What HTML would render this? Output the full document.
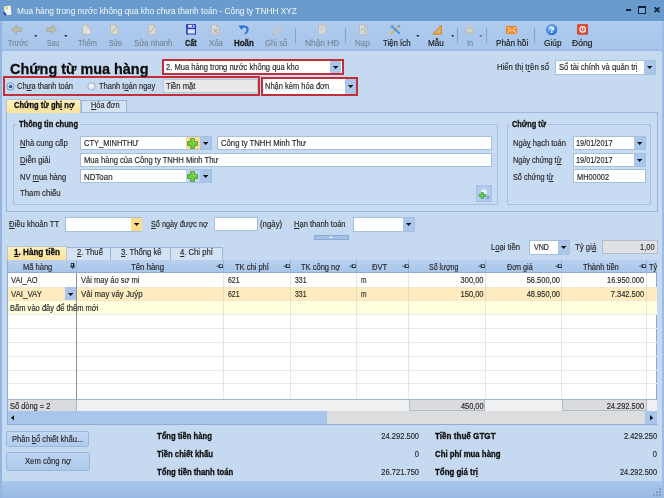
<!DOCTYPE html>
<html><head><meta charset="utf-8"><title>Chứng từ mua hàng</title>
<style>
*{box-sizing:border-box;margin:0;padding:0}
html,body{width:664px;height:498px;overflow:hidden;background:#c5daf1;font-family:"Liberation Sans",sans-serif;color:#2b2b2b}
#win{position:absolute;left:0;top:0;width:664px;height:498px;will-change:transform}
.a{position:absolute}
.t{position:absolute;white-space:nowrap;display:block;transform-origin:0 0;-webkit-text-stroke:.18px currentColor}
.t.r{transform-origin:100% 0}
.b{font-weight:bold;-webkit-text-stroke:.3px currentColor;color:#0d0d0d}
u{text-decoration:underline;text-decoration-thickness:.7px;text-underline-offset:1px}
</style></head><body><div id="win">
<div class="a" style="left:0px;top:0px;width:664px;height:21px;background:#699ccd"></div>
<div class="a" style="left:0px;top:20.5px;width:664px;height:29px;background:linear-gradient(#afcbee,#a7c5ea)"></div>
<div class="a" style="left:0px;top:49.3px;width:664px;height:1.4px;background:#9fbde4"></div>
<div class="a" style="left:0px;top:481px;width:664px;height:17px;background:linear-gradient(#a9c6ea,#98b9e3)"></div>
<div class="a" style="left:0px;top:21px;width:1.5px;height:477px;background:#93b5e0"></div>
<div class="a" style="left:661.5px;top:21px;width:2.5px;height:477px;background:#9dbce4"></div>
<svg class="a" style="left:3px;top:5px" width="9" height="11" viewBox="0 0 9 11"><path d="M1 1.500L7.500.6 8.500 9.500 1.600 10.400Z" fill="#f1f5fb"/><path d="M1 6.500L4 9.800 1.600 10.400Z" fill="#3f55b8"/><path d="M.6 7L3 10.500" stroke="#3346a8" stroke-width="1.400"/><circle cx="3.700" cy="3" r="1.500" fill="#f2c733"/></svg>
<div class="a" style="left:626.2px;top:8.7px;width:5px;height:2.2px;background:#0f2238"></div>
<div class="a" style="left:638px;top:6.3px;width:8.2px;height:7.3px;border:1px solid #0f2238;border-top-width:2.600px;background:#7aa7d6"></div>
<svg class="a" style="left:653.500px;top:7px" width="6" height="5.500" viewBox="0 0 6 5.500"><path d="M.6.400L5.400 5.100M5.400.4L.6 5.100" stroke="#0f2238" stroke-width="1.700"/></svg>
<div class="a" style="left:294.7px;top:28.3px;width:1.2px;height:14.5px;background:#7fa5d4"></div>
<div class="a" style="left:345.0px;top:28.3px;width:1.2px;height:14.5px;background:#7fa5d4"></div>
<div class="a" style="left:456.8px;top:28.3px;width:1.2px;height:14.5px;background:#7fa5d4"></div>
<div class="a" style="left:485.7px;top:28.3px;width:1.2px;height:14.5px;background:#7fa5d4"></div>
<div class="a" style="left:534.2px;top:28.3px;width:1.2px;height:14.5px;background:#7fa5d4"></div>
<svg class="a" style="left:33.8px;top:34.7px" width="3.600" height="2.300" viewBox="0 0 3.600 2.300"><path d="M0 0H3.600L1.800 2.300Z" fill="#39424f"/></svg>
<svg class="a" style="left:64.4px;top:34.7px" width="3.600" height="2.300" viewBox="0 0 3.600 2.300"><path d="M0 0H3.600L1.800 2.300Z" fill="#39424f"/></svg>
<svg class="a" style="left:416.4px;top:34.7px" width="3.600" height="2.300" viewBox="0 0 3.600 2.300"><path d="M0 0H3.600L1.800 2.300Z" fill="#39424f"/></svg>
<svg class="a" style="left:450.6px;top:34.7px" width="3.600" height="2.300" viewBox="0 0 3.600 2.300"><path d="M0 0H3.600L1.800 2.300Z" fill="#39424f"/></svg>
<svg class="a" style="left:479.2px;top:34.7px" width="3.600" height="2.300" viewBox="0 0 3.600 2.300"><path d="M0 0H3.600L1.800 2.300Z" fill="#6b7888"/></svg>
<svg class="a" style="left:11.4px;top:24px" width="11.5" height="11" viewBox="0 0 11.5 11"><path d="M.8 5.500L5.500.8V3.600H10.700V7.400H5.500V10.200Z" fill="#bcbcab" stroke="#a3a99f" stroke-width=".8" stroke-linejoin="round"/></svg>
<svg class="a" style="left:46px;top:24px" width="11.5" height="11" viewBox="0 0 11.5 11"><path d="M10.700 5.500L6 .8V3.600H.8V7.400H6V10.200Z" fill="#bcbcab" stroke="#a3a99f" stroke-width=".8" stroke-linejoin="round"/></svg>
<svg class="a" style="left:80.8px;top:24px" width="10.5" height="11" viewBox="0 0 10.5 11"><path d="M1.500.6H6.500L9 3V10.400H1.500Z" fill="#d9dbd6" stroke="#b3b8b6" stroke-width=".8"/><path d="M6.500.6V3H9" fill="#c4c8c4" stroke="#b3b8b6" stroke-width=".6"/><circle cx="7.500" cy="8" r="2" fill="#e8e6da"/></svg>
<svg class="a" style="left:109.3px;top:24px" width="10.5" height="11" viewBox="0 0 10.5 11"><path d="M1.500.6H6.500L9 3V10.400H1.500Z" fill="#d9dbd6" stroke="#b3b8b6" stroke-width=".8"/><path d="M6.500.6V3H9" fill="#c4c8c4" stroke="#b3b8b6" stroke-width=".6"/><path d="M3 8.500L7.500 3.500" stroke="#c9c4a6" stroke-width="1.600"/></svg>
<svg class="a" style="left:147.3px;top:24px" width="10.5" height="11" viewBox="0 0 10.5 11"><path d="M1.500.6H6.500L9 3V10.400H1.500Z" fill="#d9dbd6" stroke="#b3b8b6" stroke-width=".8"/><path d="M6.500.6V3H9" fill="#c4c8c4" stroke="#b3b8b6" stroke-width=".6"/><path d="M3 8.500L7.500 3.500" stroke="#c9c4a6" stroke-width="1.600"/></svg>
<svg class="a" style="left:185.6px;top:24.2px" width="10.6" height="10.6" viewBox="0 0 10.6 10.6"><path d="M.5.5H10.100V10.100H.5Z" fill="#2c47d8" stroke="#2236b0" stroke-width=".8"/><rect x="2.300" y=".9" width="6" height="2.600" fill="#e9edfb"/><rect x="5.800" y="1.100" width="1.300" height="2" fill="#2c47d8"/><rect x="1.800" y="5.300" width="7" height="4.200" fill="#f5f6fb"/><path d="M2.500 6.800H8M2.500 8.200H8" stroke="#b9c2e8" stroke-width=".6"/></svg>
<svg class="a" style="left:210px;top:24px" width="10.5" height="11" viewBox="0 0 10.5 11"><path d="M1.500.6H6.500L9 3V10.400H1.500Z" fill="#d9dbd6" stroke="#b3b8b6" stroke-width=".8"/><path d="M6.500.6V3H9" fill="#c4c8c4" stroke="#b3b8b6" stroke-width=".6"/><path d="M3.500 5L7.500 9M7.500 5L3.500 9" stroke="#b9b39c" stroke-width="1.300"/></svg>
<svg class="a" style="left:238px;top:24px" width="11.5" height="10.5" viewBox="0 0 11.5 10.5"><path d="M3.200 3.400C6.500 1.200 10.200 3 9.600 6.400 9.300 8 8.200 9 6.800 9.600" fill="none" stroke="#2a73d9" stroke-width="2"/><path d="M.6 1.800L5.800 1.200 3.600 6Z" fill="#2a73d9"/></svg>
<svg class="a" style="left:270.8px;top:24px" width="11.5" height="11" viewBox="0 0 11.5 11"><path d="M2 9.300L8.800 2.200 10 3.400 3.200 10.400Z" fill="#d8d4c8" stroke="#b8b5ac" stroke-width=".7"/><path d="M2 9.300L1.300 11 3.200 10.400Z" fill="#a9a79f"/></svg>
<svg class="a" style="left:317px;top:24px" width="10.5" height="11" viewBox="0 0 10.5 11"><path d="M1.500 1H9V8L7 10.400H1.500Z" fill="#d6d8d5" stroke="#b6bab8" stroke-width=".8"/><path d="M3 3.500H7.500M3 5.500H7.500" stroke="#c3c6c3" stroke-width=".7"/></svg>
<svg class="a" style="left:358px;top:24px" width="10.5" height="11" viewBox="0 0 10.5 11"><path d="M1.500.6H6.500L9 3V10.400H1.500Z" fill="#d9dbd6" stroke="#b3b8b6" stroke-width=".8"/><path d="M6.500.6V3H9" fill="#c4c8c4" stroke="#b3b8b6" stroke-width=".6"/><path d="M3.300 6.800A2 2 0 1 1 5.300 8.600" fill="none" stroke="#aeb3ad" stroke-width="1"/></svg>
<svg class="a" style="left:390px;top:23.8px" width="11" height="11" viewBox="0 0 11 11"><path d="M1.500 9.500L9 2" stroke="#e2b23c" stroke-width="1.700" stroke-linecap="round"/><path d="M2 2.500L9.300 9.300" stroke="#3a8fe0" stroke-width="1.700" stroke-linecap="round" stroke-dasharray="2.500 1.400"/><circle cx="2.400" cy="2.600" r="1.700" fill="none" stroke="#8fa3bd" stroke-width="1"/><circle cx="9" cy="2.200" r="1.300" fill="#5aa5ec"/></svg>
<svg class="a" style="left:431.8px;top:24px" width="10.5" height="11" viewBox="0 0 10.5 11"><path d="M9.600 1V10.200H.8Z" fill="#eaa63a" stroke="#c9822a" stroke-width=".8" stroke-linejoin="round"/><path d="M7.600 5.400V8.300H4.800Z" fill="#a9c7ec"/></svg>
<svg class="a" style="left:463.8px;top:24px" width="11.5" height="11" viewBox="0 0 11.5 11"><ellipse cx="5" cy="2.800" rx="2.800" ry="2" fill="#c9cac6"/><ellipse cx="6" cy="7" rx="5" ry="3.300" fill="#c2c3bf" stroke="#b0b2ae" stroke-width=".6"/><ellipse cx="5.500" cy="6.300" rx="3.400" ry="1.800" fill="#d3d4d0"/></svg>
<svg class="a" style="left:505.8px;top:25.6px" width="11.4" height="8.4" viewBox="0 0 11.4 8.4"><rect x=".5" y=".5" width="10.400" height="7.400" fill="#f4902d" stroke="#e0751c" stroke-width=".8"/><path d="M.8.800L5.700 4.800 10.600.8M.8 7.600L4.300 4M10.600 7.600L7.100 4" fill="none" stroke="#fde3c4" stroke-width=".9"/></svg>
<svg class="a" style="left:545.6px;top:23.8px" width="11.6" height="11.6" viewBox="0 0 11.6 11.6"><defs><radialGradient id="hg" cx=".4" cy=".3" r=".8"><stop offset="0" stop-color="#9fd0ff"/><stop offset=".6" stop-color="#3b8ae6"/><stop offset="1" stop-color="#1d62c4"/></radialGradient></defs><circle cx="5.800" cy="5.800" r="5.300" fill="url(#hg)" stroke="#2a6fcf" stroke-width=".6"/><text x="5.800" y="9" font-size="9.500" font-weight="bold" text-anchor="middle" fill="#fff" font-family="Liberation Sans,sans-serif">?</text></svg>
<svg class="a" style="left:576.8px;top:24.2px" width="11.4" height="10.6" viewBox="0 0 11.4 10.6"><rect x=".4" y=".4" width="10.600" height="9.800" rx="1" fill="#e8452c" stroke="#c9311d" stroke-width=".7"/><circle cx="5.700" cy="5.400" r="2.700" fill="none" stroke="#fff" stroke-width="1.300"/><path d="M5.700 3.800V6.600" stroke="#fff" stroke-width="1.100"/></svg>
<div class="a" style="left:162px;top:59px;width:182px;height:16px;background:#fff;border:2px solid #c32f38"></div>
<div class="a" style="left:330px;top:61px;width:11px;height:12px;background:#aac6ea"></div>
<svg class="a" style="left:332.90px;top:65.80px" width="5.200" height="3" viewBox="0 0 5.200 3"><path d="M0 0H5.200L2.600 3Z" fill="#0c0c0c"/></svg>
<div class="a" style="left:555.3px;top:60px;width:100.6px;height:14.7px;background:#fff;border:.8px solid #a5bfdf"></div>
<div class="a" style="left:644px;top:61px;width:11px;height:12.7px;background:#aac6ea"></div>
<svg class="a" style="left:646.90px;top:66.15px" width="5.200" height="3" viewBox="0 0 5.200 3"><path d="M0 0H5.200L2.600 3Z" fill="#0c0c0c"/></svg>
<div class="a" style="left:3px;top:76px;width:257px;height:20px;border:2px solid #c32f38"></div>
<svg class="a" style="left:6px;top:82px" width="9" height="9" viewBox="0 0 9 9"><defs><radialGradient id="rg1" cx=".45" cy=".4" r=".6"><stop offset="0" stop-color="#ffffff"/><stop offset="1" stop-color="#cfdcee"/></radialGradient></defs><circle cx="4.500" cy="4.400" r="3.700" fill="url(#rg1)" stroke="#6d8ab2" stroke-width=".9"/><circle cx="4.500" cy="4.400" r="1.900" fill="#1c57ad"/><circle cx="4" cy="3.900" r=".7" fill="#7fb2ee"/></svg>
<svg class="a" style="left:86.600px;top:82px" width="9" height="9" viewBox="0 0 9 9"><circle cx="4.500" cy="4.400" r="3.700" fill="url(#rg1)" stroke="#9aabc4" stroke-width=".9"/></svg>
<div class="a" style="left:163px;top:79px;width:95px;height:14px;background:#e7e9eb;border:.8px solid #bcc8d6"></div>
<div class="a" style="left:261px;top:77px;width:97px;height:19px;background:#fff;border:2px solid #c32f38"></div>
<div class="a" style="left:345px;top:79px;width:11px;height:15px;background:#aac6ea"></div>
<svg class="a" style="left:347.90px;top:85.30px" width="5.200" height="3" viewBox="0 0 5.200 3"><path d="M0 0H5.200L2.600 3Z" fill="#0c0c0c"/></svg>
<div class="a" style="left:5.5px;top:112px;width:652.3px;height:99.7px;border:.8px solid #9ab5d8;background:#c7dbf2"></div>
<div class="a" style="left:5.5px;top:99px;width:75.2px;height:13.8px;background:linear-gradient(#fff1c0,#fde296);border:.8px solid #b9c3cf;border-bottom:0"></div>
<div class="a" style="left:80.7px;top:100px;width:46.7px;height:12.2px;background:#d3e3f5;border:.8px solid #9ab5d8;border-bottom:0"></div>
<div class="a" style="left:13px;top:124.4px;width:484.8px;height:81px;border:1px solid #a6c0e1;border-radius:1px"></div>
<div class="a" style="left:17px;top:119px;width:63px;height:10px;background:#c7dbf2"></div>
<div class="a" style="left:507px;top:124.4px;width:143.6px;height:81px;border:1px solid #a6c0e1;border-radius:1px"></div>
<div class="a" style="left:510px;top:119px;width:37.5px;height:10px;background:#c7dbf2"></div>
<div class="a" style="left:80px;top:136px;width:132px;height:14px;background:#fff;border:.8px solid #a5bfdf"></div>
<div class="a" style="left:186px;top:137px;width:14px;height:12px;background:#fcdc8f"></div>
<svg class="a" style="left:187px;top:137.5px" width="11" height="11" viewBox="0 0 11 11"><path d="M3.600.6H7.400V3.600H10.400V7.400H7.400V10.400H3.600V7.400H.6V3.600H3.600Z" fill="#74cc40" stroke="#3f9c2a" stroke-width=".9" stroke-linejoin="round"/><path d="M4.400 1.600H6.600V4.400H9.400" fill="none" stroke="#a6e37a" stroke-width=".7"/></svg>
<div class="a" style="left:200px;top:137px;width:11px;height:12px;background:#aac6ea"></div>
<svg class="a" style="left:202.90px;top:141.80px" width="5.200" height="3" viewBox="0 0 5.200 3"><path d="M0 0H5.200L2.600 3Z" fill="#0c0c0c"/></svg>
<div class="a" style="left:217px;top:136px;width:275px;height:14px;background:#fff;border:.8px solid #a5bfdf"></div>
<div class="a" style="left:80px;top:153px;width:412px;height:14px;background:#fff;border:.8px solid #a5bfdf"></div>
<div class="a" style="left:80px;top:169px;width:132px;height:14px;background:#fff;border:.8px solid #a5bfdf"></div>
<div class="a" style="left:186px;top:170px;width:14px;height:12px;background:#bfd6f2"></div>
<svg class="a" style="left:187px;top:170.5px" width="11" height="11" viewBox="0 0 11 11"><path d="M3.600.6H7.400V3.600H10.400V7.400H7.400V10.400H3.600V7.400H.6V3.600H3.600Z" fill="#74cc40" stroke="#3f9c2a" stroke-width=".9" stroke-linejoin="round"/><path d="M4.400 1.600H6.600V4.400H9.400" fill="none" stroke="#a6e37a" stroke-width=".7"/></svg>
<div class="a" style="left:200px;top:170px;width:11px;height:12px;background:#aac6ea"></div>
<svg class="a" style="left:202.90px;top:174.80px" width="5.200" height="3" viewBox="0 0 5.200 3"><path d="M0 0H5.200L2.600 3Z" fill="#0c0c0c"/></svg>
<div class="a" style="left:476px;top:185px;width:16px;height:17px;background:#b3cced;border:1px solid #a6c1e5"></div>
<svg class="a" style="left:477.5px;top:187.5px" width="12.5" height="12" viewBox="0 0 12.5 12"><circle cx="5.800" cy="4.200" r="3.600" fill="#e8f1fb" stroke="#a9c0de" stroke-width=".8"/><path d="M.8 7.500H7.800M4.300 4.100V10.900" stroke="#43b03c" stroke-width="2.800"/><path d="M1.500 7.500H7.100M4.300 4.800V10.200" stroke="#6fcf5a" stroke-width="1.200"/><circle cx="10" cy="9.400" r="1.400" fill="#9db7ea" stroke="#6f8fd0" stroke-width=".7"/></svg>
<div class="a" style="left:573px;top:136px;width:73px;height:14px;background:#fff;border:.8px solid #a5bfdf"></div>
<div class="a" style="left:634px;top:137px;width:11px;height:12px;background:#aac6ea"></div>
<svg class="a" style="left:636.90px;top:141.80px" width="5.200" height="3" viewBox="0 0 5.200 3"><path d="M0 0H5.200L2.600 3Z" fill="#0c0c0c"/></svg>
<div class="a" style="left:573px;top:153px;width:73px;height:14px;background:#fff;border:.8px solid #a5bfdf"></div>
<div class="a" style="left:634px;top:154px;width:11px;height:12px;background:#aac6ea"></div>
<svg class="a" style="left:636.90px;top:158.80px" width="5.200" height="3" viewBox="0 0 5.200 3"><path d="M0 0H5.200L2.600 3Z" fill="#0c0c0c"/></svg>
<div class="a" style="left:573px;top:169px;width:73px;height:14px;background:#fff;border:.8px solid #a5bfdf"></div>
<div class="a" style="left:64.8px;top:217.3px;width:77.7px;height:14.3px;background:#fff;border:.8px solid #a5bfdf"></div>
<div class="a" style="left:130.6px;top:218px;width:11.2px;height:12.9px;background:#fcdc8c"></div>
<svg class="a" style="left:133.60px;top:223.25px" width="5.200" height="3" viewBox="0 0 5.200 3"><path d="M0 0H5.200L2.600 3Z" fill="#0c0c0c"/></svg>
<div class="a" style="left:213.6px;top:217.3px;width:44.4px;height:14px;background:#fff;border:.8px solid #a5bfdf"></div>
<div class="a" style="left:353.3px;top:217.3px;width:61.5px;height:14.3px;background:#fff;border:.8px solid #a5bfdf"></div>
<div class="a" style="left:402.5px;top:218px;width:11.6px;height:12.9px;background:#aac6ea"></div>
<svg class="a" style="left:405.70px;top:223.25px" width="5.200" height="3" viewBox="0 0 5.200 3"><path d="M0 0H5.200L2.600 3Z" fill="#0c0c0c"/></svg>
<div class="a" style="left:314.3px;top:234.6px;width:34.7px;height:5.4px;background:#a3c1e8;border:.7px solid #8cacd6"></div>
<svg class="a" style="left:329.400px;top:236.200px" width="4" height="2.200" viewBox="0 0 4 2.200"><path d="M0 2.200H4L2 0Z" fill="#fff"/></svg>
<div class="a" style="left:529px;top:240.4px;width:40.8px;height:14.3px;background:#fff;border:.8px solid #a5bfdf"></div>
<div class="a" style="left:558px;top:241.1px;width:11.1px;height:12.9px;background:#aac6ea"></div>
<svg class="a" style="left:560.95px;top:246.35px" width="5.200" height="3" viewBox="0 0 5.200 3"><path d="M0 0H5.200L2.600 3Z" fill="#0c0c0c"/></svg>
<div class="a" style="left:601.6px;top:240.2px;width:56px;height:14px;background:#dfe1e4;border:.8px solid #b3bdc9"></div>
<div class="a" style="left:6.8px;top:246.2px;width:60.5px;height:13.6px;background:linear-gradient(#fff1c0,#fde296);border:.8px solid #b9c3cf;border-bottom:0"></div>
<div class="a" style="left:67.3px;top:247px;width:43.7px;height:12.6px;background:#d3e3f5;border:.8px solid #9ab5d8;border-bottom:0;border-left:0"></div>
<div class="a" style="left:111px;top:247px;width:60.400000000000006px;height:12.6px;background:#d3e3f5;border:.8px solid #9ab5d8;border-bottom:0;border-left:0"></div>
<div class="a" style="left:171.4px;top:247px;width:51.5px;height:12.6px;background:#d3e3f5;border:.8px solid #9ab5d8;border-bottom:0;border-left:0"></div>
<div class="a" style="left:6.8px;top:259.5px;width:650.7px;height:165.5px;background:#fff;border:.8px solid #8fabd0"></div>
<div class="a" style="left:7.6px;top:260.2px;width:649.1px;height:13px;background:linear-gradient(#b9d1f0,#a8c5e9);border-bottom:.8px solid #8fabd0"></div>
<div class="a" style="left:76.19999999999999px;top:260.2px;width:0.9px;height:13px;background:#97b4dc"></div>
<div class="a" style="left:223.2px;top:260.2px;width:0.9px;height:13px;background:#97b4dc"></div>
<div class="a" style="left:289.8px;top:260.2px;width:0.9px;height:13px;background:#97b4dc"></div>
<div class="a" style="left:356.1px;top:260.2px;width:0.9px;height:13px;background:#97b4dc"></div>
<div class="a" style="left:408.40000000000003px;top:260.2px;width:0.9px;height:13px;background:#97b4dc"></div>
<div class="a" style="left:485.1px;top:260.2px;width:0.9px;height:13px;background:#97b4dc"></div>
<div class="a" style="left:561.4px;top:260.2px;width:0.9px;height:13px;background:#97b4dc"></div>
<div class="a" style="left:646.2px;top:260.2px;width:0.9px;height:13px;background:#97b4dc"></div>
<svg class="a" style="left:69.8px;top:262.600px" width="5.400" height="6.800" viewBox="0 0 5.400 6.800"><rect x="1.300" y=".4" width="2.600" height="3.200" fill="none" stroke="#16202e" stroke-width=".8"/><path d="M3.500.4V3.600" stroke="#16202e" stroke-width="1.300"/><path d="M.2 3.900H5.200" stroke="#16202e" stroke-width=".9"/><path d="M2.700 4.200V6.800" stroke="#16202e" stroke-width=".8"/></svg>
<svg class="a" style="left:216.3px;top:263.900px" width="7" height="4.400" viewBox="0 0 7 4.400"><path d="M.3 2.200H3" stroke="#1b2738" stroke-width=".7"/><path d="M3.100 .3V4.100" stroke="#1b2738" stroke-width=".8"/><rect x="3.500" y=".8" width="2.800" height="2.800" fill="#d5e2f3" stroke="#1b2738" stroke-width=".8"/><path d="M3.300 3.500H6.700" stroke="#1b2738" stroke-width=".9"/></svg>
<svg class="a" style="left:282.5px;top:263.900px" width="7" height="4.400" viewBox="0 0 7 4.400"><path d="M.3 2.200H3" stroke="#1b2738" stroke-width=".7"/><path d="M3.100 .3V4.100" stroke="#1b2738" stroke-width=".8"/><rect x="3.500" y=".8" width="2.800" height="2.800" fill="#d5e2f3" stroke="#1b2738" stroke-width=".8"/><path d="M3.300 3.500H6.700" stroke="#1b2738" stroke-width=".9"/></svg>
<svg class="a" style="left:349.3px;top:263.900px" width="7" height="4.400" viewBox="0 0 7 4.400"><path d="M.3 2.200H3" stroke="#1b2738" stroke-width=".7"/><path d="M3.100 .3V4.100" stroke="#1b2738" stroke-width=".8"/><rect x="3.500" y=".8" width="2.800" height="2.800" fill="#d5e2f3" stroke="#1b2738" stroke-width=".8"/><path d="M3.300 3.500H6.700" stroke="#1b2738" stroke-width=".9"/></svg>
<svg class="a" style="left:401.6px;top:263.900px" width="7" height="4.400" viewBox="0 0 7 4.400"><path d="M.3 2.200H3" stroke="#1b2738" stroke-width=".7"/><path d="M3.100 .3V4.100" stroke="#1b2738" stroke-width=".8"/><rect x="3.500" y=".8" width="2.800" height="2.800" fill="#d5e2f3" stroke="#1b2738" stroke-width=".8"/><path d="M3.300 3.500H6.700" stroke="#1b2738" stroke-width=".9"/></svg>
<svg class="a" style="left:478.3px;top:263.900px" width="7" height="4.400" viewBox="0 0 7 4.400"><path d="M.3 2.200H3" stroke="#1b2738" stroke-width=".7"/><path d="M3.100 .3V4.100" stroke="#1b2738" stroke-width=".8"/><rect x="3.500" y=".8" width="2.800" height="2.800" fill="#d5e2f3" stroke="#1b2738" stroke-width=".8"/><path d="M3.300 3.500H6.700" stroke="#1b2738" stroke-width=".9"/></svg>
<svg class="a" style="left:554.6px;top:263.900px" width="7" height="4.400" viewBox="0 0 7 4.400"><path d="M.3 2.200H3" stroke="#1b2738" stroke-width=".7"/><path d="M3.100 .3V4.100" stroke="#1b2738" stroke-width=".8"/><rect x="3.500" y=".8" width="2.800" height="2.800" fill="#d5e2f3" stroke="#1b2738" stroke-width=".8"/><path d="M3.300 3.500H6.700" stroke="#1b2738" stroke-width=".9"/></svg>
<svg class="a" style="left:639.4px;top:263.900px" width="7" height="4.400" viewBox="0 0 7 4.400"><path d="M.3 2.200H3" stroke="#1b2738" stroke-width=".7"/><path d="M3.100 .3V4.100" stroke="#1b2738" stroke-width=".8"/><rect x="3.500" y=".8" width="2.800" height="2.800" fill="#d5e2f3" stroke="#1b2738" stroke-width=".8"/><path d="M3.300 3.500H6.700" stroke="#1b2738" stroke-width=".9"/></svg>
<div class="a" style="left:7.6px;top:286.6px;width:649.1px;height:14.6px;background:#ffedc1"></div>
<div class="a" style="left:7.6px;top:301.2px;width:649.1px;height:13.3px;background:#ffffdd"></div>
<div class="a" style="left:7.6px;top:286.5px;width:649.1px;height:0.8px;background:#ebe3d0;opacity:.5"></div>
<div class="a" style="left:7.6px;top:300.20000000000005px;width:649.1px;height:0.8px;background:#ebe3d0;opacity:.5"></div>
<div class="a" style="left:7.6px;top:314.1px;width:649.1px;height:0.8px;background:#e9ecef"></div>
<div class="a" style="left:7.6px;top:327.90000000000003px;width:649.1px;height:0.8px;background:#e9ecef"></div>
<div class="a" style="left:7.6px;top:341.8px;width:649.1px;height:0.8px;background:#e9ecef"></div>
<div class="a" style="left:7.6px;top:355.70000000000005px;width:649.1px;height:0.8px;background:#e9ecef"></div>
<div class="a" style="left:7.6px;top:369.5px;width:649.1px;height:0.8px;background:#e9ecef"></div>
<div class="a" style="left:7.6px;top:383.40000000000003px;width:649.1px;height:0.8px;background:#e9ecef"></div>
<div class="a" style="left:223.2px;top:273.2px;width:0.8px;height:125.8px;background:rgba(110,120,135,.17)"></div>
<div class="a" style="left:289.8px;top:273.2px;width:0.8px;height:125.8px;background:rgba(110,120,135,.17)"></div>
<div class="a" style="left:356.1px;top:273.2px;width:0.8px;height:125.8px;background:rgba(110,120,135,.17)"></div>
<div class="a" style="left:408.40000000000003px;top:273.2px;width:0.8px;height:125.8px;background:rgba(110,120,135,.17)"></div>
<div class="a" style="left:485.1px;top:273.2px;width:0.8px;height:125.8px;background:rgba(110,120,135,.17)"></div>
<div class="a" style="left:561.4px;top:273.2px;width:0.8px;height:125.8px;background:rgba(110,120,135,.17)"></div>
<div class="a" style="left:646.2px;top:273.2px;width:0.8px;height:125.8px;background:rgba(110,120,135,.17)"></div>
<div class="a" style="left:76.2px;top:273.2px;width:1px;height:125.8px;background:#8e8f91"></div>
<div class="a" style="left:76.2px;top:300.6px;width:1px;height:14px;background:#8e8f91"></div>
<div class="a" style="left:64.8px;top:287.3px;width:11.4px;height:13px;background:#aac6ea"></div>
<svg class="a" style="left:67.90px;top:292.60px" width="5.200" height="3" viewBox="0 0 5.200 3"><path d="M0 0H5.200L2.600 3Z" fill="#0c0c0c"/></svg>
<div class="a" style="left:7.6px;top:399px;width:649.1px;height:12.3px;background:#eff0f1;border-top:.8px solid #9fb5d1"></div>
<div class="a" style="left:7.6px;top:399.6px;width:69px;height:11.7px;background:#d9dbde;border-right:.8px solid #aeb4bc"></div>
<div class="a" style="left:408.8px;top:399.6px;width:76.7px;height:11.7px;background:#d9dbde;border:.8px solid #b7bcc4;border-top:0"></div>
<div class="a" style="left:562px;top:399.6px;width:84.6px;height:11.7px;background:#d9dbde;border:.8px solid #b7bcc4;border-top:0"></div>
<div class="a" style="left:7.6px;top:411.3px;width:649.1px;height:13px;background:#dcdddf"></div>
<div class="a" style="left:7.6px;top:411.3px;width:319.2px;height:13px;background:#a9c6ea"></div>
<div class="a" style="left:645px;top:411.3px;width:11.7px;height:13px;background:#a9c6ea"></div>
<svg class="a" style="left:11.300px;top:415.400px" width="3.200" height="5.600" viewBox="0 0 3.200 5.600"><path d="M3.200 0V5.600L0 2.800Z" fill="#0c0c0c"/></svg>
<svg class="a" style="left:650px;top:415.400px" width="3.200" height="5.600" viewBox="0 0 3.200 5.600"><path d="M0 0V5.600L3.200 2.800Z" fill="#0c0c0c"/></svg>
<div class="a" style="left:6.3px;top:431.3px;width:83px;height:15.4px;background:linear-gradient(#c2d8f3,#afcbee);border:.8px solid #9ab6da;border-radius:1.500px"></div>
<div class="a" style="left:6.3px;top:452.4px;width:83.7px;height:18.6px;background:linear-gradient(#bdd5f2,#abc8ec);border:.8px solid #9ab6da;border-radius:1.500px"></div>
<div class="a" style="left:659px;top:494px;width:1.5px;height:1.5px;background:#7f9fc9"></div>
<div class="a" style="left:656px;top:494px;width:1.5px;height:1.5px;background:#7f9fc9"></div>
<div class="a" style="left:659px;top:491px;width:1.5px;height:1.5px;background:#7f9fc9"></div>
<div class="a" style="left:653px;top:494px;width:1.5px;height:1.5px;background:#7f9fc9"></div>
<div class="a" style="left:656px;top:491px;width:1.5px;height:1.5px;background:#7f9fc9"></div>
<div class="a" style="left:659px;top:488px;width:1.5px;height:1.5px;background:#7f9fc9"></div>
<div class="t" style="top:5.58px;font-size:9px;line-height:11px;left:16.60px;color:#f3f7fc;transform:scaleX(0.924);-webkit-text-stroke:0;">Mua hàng trong nước không qua kho chưa thanh toán - Công ty TNHH XYZ</div>
<div class="t" style="top:37.31px;font-size:9.2px;line-height:12px;left:7.50px;color:#7b899e;transform:scaleX(0.789);">Trước</div>
<div class="t" style="top:37.31px;font-size:9.2px;line-height:12px;left:46.70px;color:#7b899e;transform:scaleX(0.740);">Sau</div>
<div class="t" style="top:37.31px;font-size:9.2px;line-height:12px;left:77.80px;color:#7b899e;transform:scaleX(0.813);">Thêm</div>
<div class="t" style="top:37.31px;font-size:9.2px;line-height:12px;left:108.60px;color:#7b899e;transform:scaleX(0.742);">Sửa</div>
<div class="t" style="top:37.31px;font-size:9.2px;line-height:12px;left:134.40px;color:#7b899e;transform:scaleX(0.844);">Sửa nhanh</div>
<div class="t b" style="top:37.31px;font-size:9.2px;line-height:12px;left:184.80px;color:#1c1c1c;transform:scaleX(0.783);">Cất</div>
<div class="t" style="top:37.31px;font-size:9.2px;line-height:12px;left:208.60px;color:#7b899e;transform:scaleX(0.844);">Xóa</div>
<div class="t b" style="top:37.31px;font-size:9.2px;line-height:12px;left:234.00px;color:#1c1c1c;transform:scaleX(0.862);">Hoãn</div>
<div class="t" style="top:37.31px;font-size:9.2px;line-height:12px;left:265.40px;color:#7b899e;transform:scaleX(0.840);">Ghi sổ</div>
<div class="t" style="top:37.31px;font-size:9.2px;line-height:12px;left:304.60px;color:#7b899e;transform:scaleX(0.907);">Nhận HĐ</div>
<div class="t" style="top:37.31px;font-size:9.2px;line-height:12px;left:355.00px;color:#7b899e;transform:scaleX(0.878);">Nạp</div>
<div class="t" style="top:37.31px;font-size:9.2px;line-height:12px;left:382.50px;color:#1c1c1c;transform:scaleX(0.850);">Tiện ích</div>
<div class="t" style="top:37.31px;font-size:9.2px;line-height:12px;left:428.30px;color:#1c1c1c;transform:scaleX(0.890);">Mẫu</div>
<div class="t" style="top:37.31px;font-size:9.2px;line-height:12px;left:466.90px;color:#7b899e;transform:scaleX(0.795);">In</div>
<div class="t" style="top:37.31px;font-size:9.2px;line-height:12px;left:496.00px;color:#1c1c1c;transform:scaleX(0.888);">Phản hồi</div>
<div class="t" style="top:37.31px;font-size:9.2px;line-height:12px;left:543.50px;color:#1c1c1c;transform:scaleX(0.901);">Giúp</div>
<div class="t" style="top:37.31px;font-size:9.2px;line-height:12px;left:572.00px;color:#1c1c1c;transform:scaleX(0.933);">Đóng</div>
<div class="t b" style="top:59.33px;font-size:15.5px;line-height:19px;left:9.50px;color:#0b0b0b;transform:scaleX(0.929);">Chứng từ mua hàng</div>
<div class="t" style="top:62.38px;font-size:9px;line-height:11px;left:165.60px;transform:scaleX(0.839);">2. Mua hàng trong nước không qua kho</div>
<div class="t" style="top:61.78px;font-size:9px;line-height:11px;left:497.40px;transform:scaleX(0.859);">Hiển thị t<u>r</u>ên sổ</div>
<div class="t" style="top:61.78px;font-size:9px;line-height:11px;left:559.00px;transform:scaleX(0.853);">Sổ tài chính và quản trị</div>
<div class="t" style="top:80.78px;font-size:9px;line-height:11px;left:17.00px;transform:scaleX(0.828);">Ch<u>ư</u>a thanh toán</div>
<div class="t" style="top:80.78px;font-size:9px;line-height:11px;left:98.70px;transform:scaleX(0.833);">Thanh t<u>o</u>án ngay</div>
<div class="t" style="top:80.78px;font-size:9px;line-height:11px;left:165.60px;transform:scaleX(0.848);">Tiền mặt</div>
<div class="t" style="top:80.78px;font-size:9px;line-height:11px;left:264.80px;transform:scaleX(0.834);">Nhận kèm hóa đơn</div>
<div class="t b" style="top:99.78px;font-size:9px;line-height:11px;left:14.30px;transform:scaleX(0.838);">Chứng từ gh<u>i</u> nợ</div>
<div class="t" style="top:99.78px;font-size:9px;line-height:11px;left:90.50px;transform:scaleX(0.816);"><u>H</u>óa đơn</div>
<div class="t b" style="top:118.58px;font-size:9px;line-height:11px;left:19.00px;transform:scaleX(0.837);">Thông tin chung</div>
<div class="t b" style="top:118.58px;font-size:9px;line-height:11px;left:511.80px;transform:scaleX(0.819);">Chứng từ</div>
<div class="t" style="top:138.08px;font-size:9px;line-height:11px;left:19.60px;transform:scaleX(0.859);"><u>N</u>hà cung cấp</div>
<div class="t" style="top:138.08px;font-size:9px;line-height:11px;left:84.00px;transform:scaleX(0.833);">CTY_MINHTHƯ</div>
<div class="t" style="top:138.08px;font-size:9px;line-height:11px;left:221.00px;transform:scaleX(0.857);">Công ty TNHH Minh Thư</div>
<div class="t" style="top:154.58px;font-size:9px;line-height:11px;left:19.60px;transform:scaleX(0.868);"><u>D</u>iễn giải</div>
<div class="t" style="top:154.58px;font-size:9px;line-height:11px;left:84.00px;transform:scaleX(0.847);">Mua hàng của Công ty TNHH Minh Thư</div>
<div class="t" style="top:172.38px;font-size:9px;line-height:11px;left:19.60px;transform:scaleX(0.839);">NV <u>m</u>ua hàng</div>
<div class="t" style="top:172.38px;font-size:9px;line-height:11px;left:84.00px;transform:scaleX(0.877);">NDToan</div>
<div class="t" style="top:187.78px;font-size:9px;line-height:11px;left:19.60px;transform:scaleX(0.865);">Tham chiếu</div>
<div class="t" style="top:138.08px;font-size:9px;line-height:11px;left:513.30px;transform:scaleX(0.840);">Ngà<u>y</u> hạch toán</div>
<div class="t" style="top:138.08px;font-size:9px;line-height:11px;left:576.40px;transform:scaleX(0.812);">19/01/2017</div>
<div class="t" style="top:154.58px;font-size:9px;line-height:11px;left:513.30px;transform:scaleX(0.807);">Ngày chứng t<u>ừ</u></div>
<div class="t" style="top:154.58px;font-size:9px;line-height:11px;left:576.40px;transform:scaleX(0.812);">19/01/2017</div>
<div class="t" style="top:172.18px;font-size:9px;line-height:11px;left:513.30px;transform:scaleX(0.808);">Số chứng t<u>ừ</u></div>
<div class="t" style="top:172.18px;font-size:9px;line-height:11px;left:577.00px;transform:scaleX(0.820);">MH00002</div>
<div class="t" style="top:218.68px;font-size:9px;line-height:11px;left:8.80px;transform:scaleX(0.853);"><u>Đ</u>iều khoản TT</div>
<div class="t" style="top:218.68px;font-size:9px;line-height:11px;left:151.00px;transform:scaleX(0.807);"><u>S</u>ố ngày được nợ</div>
<div class="t" style="top:218.68px;font-size:9px;line-height:11px;left:259.80px;transform:scaleX(0.870);">(ngày)</div>
<div class="t" style="top:218.68px;font-size:9px;line-height:11px;left:293.70px;transform:scaleX(0.837);"><u>H</u>ạn thanh toán</div>
<div class="t" style="top:241.88px;font-size:9px;line-height:11px;left:490.70px;transform:scaleX(0.851);">L<u>o</u>ại tiền</div>
<div class="t" style="top:241.88px;font-size:9px;line-height:11px;left:533.70px;transform:scaleX(0.789);">VND</div>
<div class="t" style="top:241.88px;font-size:9px;line-height:11px;left:574.90px;transform:scaleX(0.868);">Tỷ gi<u>á</u></div>
<div class="t r" style="top:241.88px;font-size:9px;line-height:11px;right:9.00px;transform:scaleX(0.827);">1,00</div>
<div class="t b" style="top:246.98px;font-size:9px;line-height:11px;left:14.30px;transform:scaleX(0.901);"><u>1</u>. Hàng tiền</div>
<div class="t" style="top:246.98px;font-size:9px;line-height:11px;left:76.60px;transform:scaleX(0.853);"><u>2</u>. Thuế</div>
<div class="t" style="top:246.98px;font-size:9px;line-height:11px;left:121.40px;transform:scaleX(0.857);"><u>3</u>. Thống kê</div>
<div class="t" style="top:246.98px;font-size:9px;line-height:11px;left:180.00px;transform:scaleX(0.851);"><u>4</u>. Chi phí</div>
<div class="t" style="top:262.18px;font-size:9px;line-height:11px;left:23.00px;transform:scaleX(0.836);">Mã hàng</div>
<div class="t" style="top:262.18px;font-size:9px;line-height:11px;left:130.60px;transform:scaleX(0.868);">Tên hàng</div>
<div class="t" style="top:262.18px;font-size:9px;line-height:11px;left:235.40px;transform:scaleX(0.836);">TK chi phí</div>
<div class="t" style="top:262.18px;font-size:9px;line-height:11px;left:301.00px;transform:scaleX(0.835);">TK công nợ</div>
<div class="t" style="top:262.18px;font-size:9px;line-height:11px;left:371.60px;transform:scaleX(0.839);">ĐVT</div>
<div class="t" style="top:262.18px;font-size:9px;line-height:11px;left:429.40px;transform:scaleX(0.785);">Số lượng</div>
<div class="t" style="top:262.18px;font-size:9px;line-height:11px;left:507.30px;transform:scaleX(0.805);">Đơn giá</div>
<div class="t" style="top:262.18px;font-size:9px;line-height:11px;left:583.20px;transform:scaleX(0.842);">Thành tiền</div>
<div class="t" style="top:262.18px;font-size:9px;line-height:11px;left:648.80px;transform:scaleX(0.820);">Tỷ</div>
<div class="t" style="top:275.48px;font-size:9px;line-height:11px;left:11.30px;transform:scaleX(0.838);">VAI_AO</div>
<div class="t" style="top:275.48px;font-size:9px;line-height:11px;left:81.00px;transform:scaleX(0.835);">Vải may áo sơ mi</div>
<div class="t" style="top:275.48px;font-size:9px;line-height:11px;left:228.00px;transform:scaleX(0.765);">621</div>
<div class="t" style="top:275.48px;font-size:9px;line-height:11px;left:294.50px;transform:scaleX(0.765);">331</div>
<div class="t" style="top:275.48px;font-size:9px;line-height:11px;left:360.80px;transform:scaleX(0.733);">m</div>
<div class="t r" style="top:275.48px;font-size:9px;line-height:11px;right:180.00px;transform:scaleX(0.835);">300,00</div>
<div class="t r" style="top:275.48px;font-size:9px;line-height:11px;right:104.00px;transform:scaleX(0.834);">56.500,00</div>
<div class="t r" style="top:275.48px;font-size:9px;line-height:11px;right:19.70px;transform:scaleX(0.821);">16.950.000</div>
<div class="t" style="top:289.28px;font-size:9px;line-height:11px;left:11.30px;transform:scaleX(0.870);">VAI_VAY</div>
<div class="t" style="top:289.28px;font-size:9px;line-height:11px;left:81.00px;transform:scaleX(0.872);">Vải may váy Juýp</div>
<div class="t" style="top:289.28px;font-size:9px;line-height:11px;left:228.00px;transform:scaleX(0.765);">621</div>
<div class="t" style="top:289.28px;font-size:9px;line-height:11px;left:294.50px;transform:scaleX(0.765);">331</div>
<div class="t" style="top:289.28px;font-size:9px;line-height:11px;left:360.80px;transform:scaleX(0.733);">m</div>
<div class="t r" style="top:289.28px;font-size:9px;line-height:11px;right:180.00px;transform:scaleX(0.835);">150,00</div>
<div class="t r" style="top:289.28px;font-size:9px;line-height:11px;right:104.00px;transform:scaleX(0.834);">48.950,00</div>
<div class="t r" style="top:289.28px;font-size:9px;line-height:11px;right:19.70px;transform:scaleX(0.832);">7.342.500</div>
<div class="t" style="top:303.18px;font-size:9px;line-height:11px;left:9.50px;transform:scaleX(0.839);">Bấm vào đây để thêm mới</div>
<div class="t" style="top:400.58px;font-size:9px;line-height:11px;left:10.00px;transform:scaleX(0.826);">Số dòng = 2</div>
<div class="t r" style="top:400.58px;font-size:9px;line-height:11px;right:180.00px;transform:scaleX(0.821);">450,00</div>
<div class="t r" style="top:400.58px;font-size:9px;line-height:11px;right:19.80px;transform:scaleX(0.830);">24.292.500</div>
<div class="t" style="top:434.38px;font-size:9px;line-height:11px;left:11.80px;transform:scaleX(0.842);">Phân <u>b</u>ổ chiết khấu...</div>
<div class="t" style="top:456.08px;font-size:9px;line-height:11px;left:25.00px;transform:scaleX(0.853);">Xem công nợ</div>
<div class="t b" style="top:431.18px;font-size:9px;line-height:11px;left:156.80px;transform:scaleX(0.850);">Tổng tiền hàng</div>
<div class="t b" style="top:448.58px;font-size:9px;line-height:11px;left:156.80px;transform:scaleX(0.857);">Tiền chiết khấu</div>
<div class="t b" style="top:466.88px;font-size:9px;line-height:11px;left:156.80px;transform:scaleX(0.856);">Tổng tiền thanh toán</div>
<div class="t r" style="top:431.18px;font-size:9px;line-height:11px;right:244.80px;transform:scaleX(0.837);">24.292.500</div>
<div class="t r" style="top:448.58px;font-size:9px;line-height:11px;right:244.80px;transform:scaleX(0.837);">0</div>
<div class="t r" style="top:466.88px;font-size:9px;line-height:11px;right:244.80px;transform:scaleX(0.837);">26.721.750</div>
<div class="t b" style="top:431.18px;font-size:9px;line-height:11px;left:435.00px;transform:scaleX(0.900);">Tiền thuế GTGT</div>
<div class="t b" style="top:448.58px;font-size:9px;line-height:11px;left:435.00px;transform:scaleX(0.868);">Chi phí mua hàng</div>
<div class="t b" style="top:466.88px;font-size:9px;line-height:11px;left:435.00px;transform:scaleX(0.878);">Tổng giá trị</div>
<div class="t r" style="top:431.18px;font-size:9px;line-height:11px;right:6.50px;transform:scaleX(0.827);">2.429.250</div>
<div class="t r" style="top:448.58px;font-size:9px;line-height:11px;right:6.50px;transform:scaleX(0.837);">0</div>
<div class="t r" style="top:466.88px;font-size:9px;line-height:11px;right:6.50px;transform:scaleX(0.824);">24.292.500</div>
</div></body></html>
